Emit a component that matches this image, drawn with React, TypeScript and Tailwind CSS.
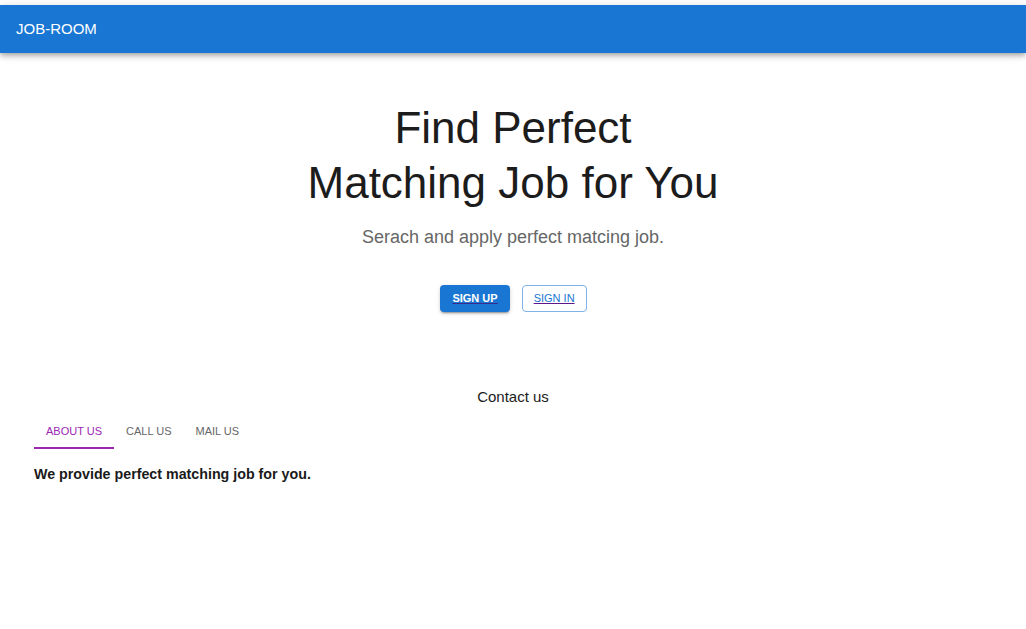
import { useState } from 'react';

const tabs = ['ABOUT US', 'CALL US', 'MAIL US'];

const tabText: Record<string, string> = {
  'ABOUT US': 'We provide perfect matching job for you.',
  'CALL US': 'Call us any time: +1 000 000 0000',
  'MAIL US': 'Mail us at info@jobroom.com',
};

export default function App() {
  const [active, setActive] = useState('ABOUT US');

  return (
    <div className="min-h-screen bg-white pt-[5px] font-['Liberation_Sans',Arial,sans-serif] text-[#212121]">
      {/* Navbar */}
      <header className="h-12 bg-[#1976d2] flex items-center px-4 text-white text-[15px] shadow-[0_2px_4px_-1px_rgba(0,0,0,0.2),0_4px_5px_0_rgba(0,0,0,0.14),0_1px_10px_0_rgba(0,0,0,0.12)]">
        JOB-ROOM
      </header>

      {/* Hero */}
      <section className="flex flex-col items-center text-center pt-[47px]">
        <h1 className="text-[44px] leading-[55px] text-[#1c1c1c]">
          Find Perfect
          <br />
          Matching Job for You
        </h1>
        <p className="mt-[14px] text-[18px] leading-[27px] text-[#666]">
          Serach and apply perfect matcing job.
        </p>

        <div className="mt-[34px] flex gap-3 pl-[1px]">
          <a
            href="#"
            className="h-[27px] px-3 flex items-center rounded bg-[#1976d2] text-white text-[11px] font-bold underline decoration-[#3a2b8c] shadow-[0_3px_1px_-2px_rgba(0,0,0,0.2),0_2px_2px_0_rgba(0,0,0,0.14),0_1px_5px_0_rgba(0,0,0,0.12)]"
          >
            SIGN UP
          </a>
          <a
            href="#"
            className="h-[27px] px-[11px] flex items-center rounded border border-[#7fb2e5] text-[#1976d2] text-[11px] underline decoration-[#5b1a8b]"
          >
            SIGN IN
          </a>
        </div>
      </section>

      {/* Contact */}
      <section className="mt-[74px]">
        <h2 className="text-center text-[15px] leading-[22px] text-[#1c1c1c]">Contact us</h2>
        <div className="px-[34px] mt-[1px]">
          <div className="flex">
            {tabs.map((t) => (
              <button
                key={t}
                onClick={() => setActive(t)}
                className={
                  'relative h-10 px-3 pt-1 text-[11px] ' +
                  (active === t ? 'text-[#9c27b0]' : 'text-[#666]')
                }
              >
                {t}
                {active === t && (
                  <span className="absolute left-0 right-0 bottom-0 h-[2px] bg-[#9c27b0]" />
                )}
              </button>
            ))}
          </div>
          <p className="mt-[15px] text-[14.25px] leading-5 font-bold text-[#1a1a1a]">
            {tabText[active]}
          </p>
        </div>
      </section>
    </div>
  );
}
